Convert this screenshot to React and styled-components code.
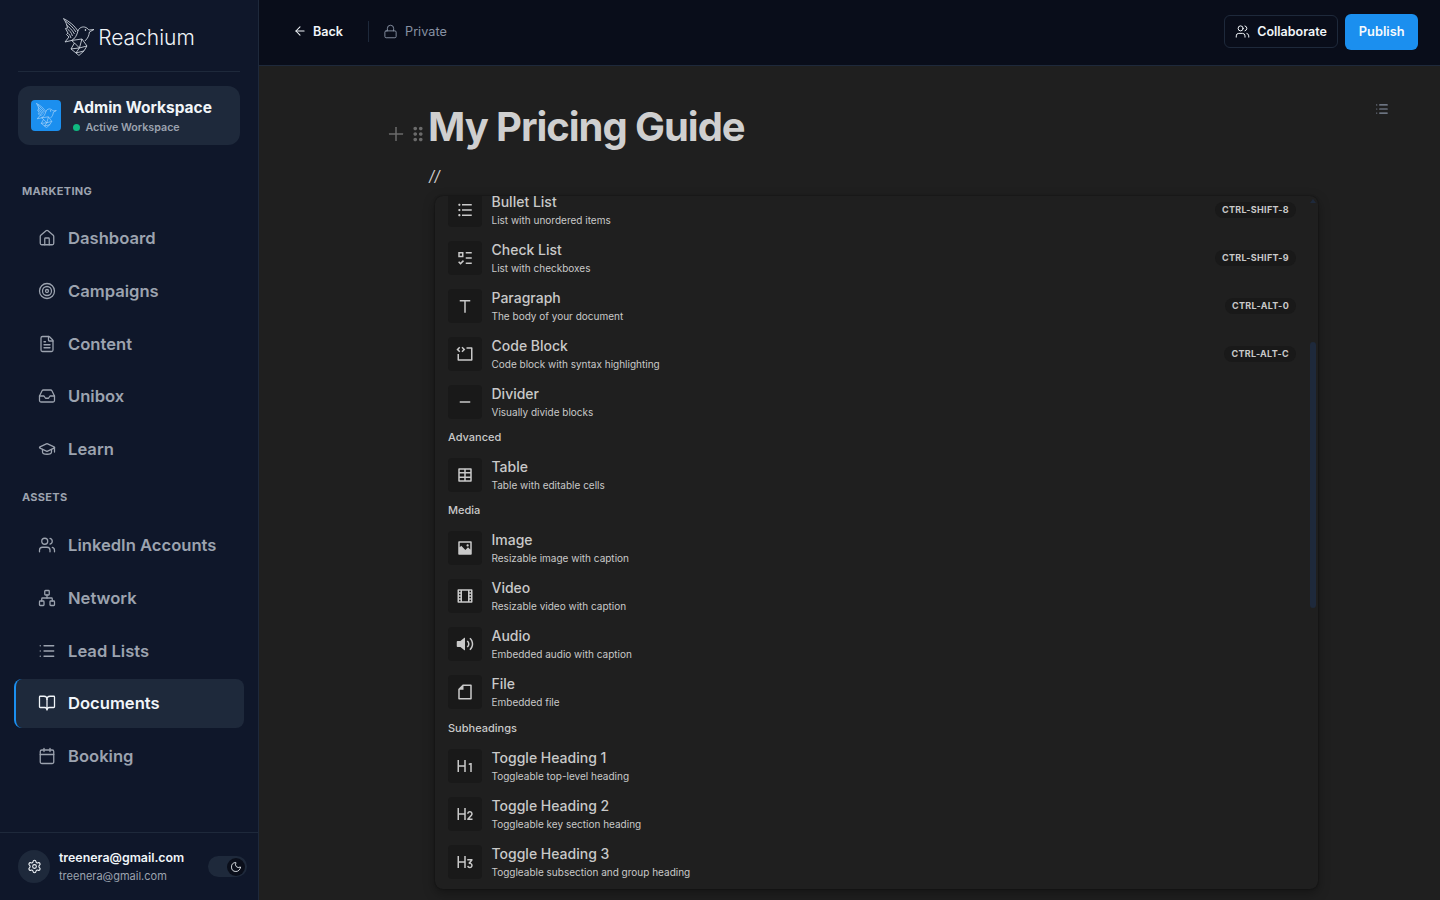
import styled, { createGlobalStyle } from "styled-components";
import {
  ArrowLeft,
  BookOpen,
  Calendar,
  FileText,
  GraduationCap,
  Home,
  Inbox,
  List,
  Lock,
  Moon,
  Network,
  Settings,
  Target,
  Users,
} from "lucide-react";
import {
  RiCodeBlock,
  RiFile2Line,
  RiFilmLine,
  RiH1,
  RiH2,
  RiH3,
  RiImage2Fill,
  RiListCheck3,
  RiListUnordered,
  RiSubtractFill,
  RiTable2,
  RiText,
  RiVolumeUpFill,
} from "react-icons/ri";
import { AiOutlinePlus } from "react-icons/ai";
import { MdDragIndicator } from "react-icons/md";

const GlobalStyle = createGlobalStyle`
  html, body {
    margin: 0;
    height: 100%;
    overflow: hidden;
    background: #1f1f1f;
    font-family: Inter, "Liberation Sans", sans-serif;
  }
  * { box-sizing: border-box; }
`;

const marketing = [
  { label: "Dashboard", Icon: Home },
  { label: "Campaigns", Icon: Target },
  { label: "Content", Icon: FileText },
  { label: "Unibox", Icon: Inbox },
  { label: "Learn", Icon: GraduationCap },
];

const assets = [
  { label: "LinkedIn Accounts", Icon: Users },
  { label: "Network", Icon: Network },
  { label: "Lead Lists", Icon: List },
  { label: "Documents", Icon: BookOpen, active: true },
  { label: "Booking", Icon: Calendar },
];

const blocks = [
  { title: "Bullet List", sub: "List with unordered items", Icon: RiListUnordered, key: "CTRL-SHIFT-8" },
  { title: "Check List", sub: "List with checkboxes", Icon: RiListCheck3, key: "CTRL-SHIFT-9" },
  { title: "Paragraph", sub: "The body of your document", Icon: RiText, key: "CTRL-ALT-0" },
  { title: "Code Block", sub: "Code block with syntax highlighting", Icon: RiCodeBlock, key: "CTRL-ALT-C" },
  { title: "Divider", sub: "Visually divide blocks", Icon: RiSubtractFill },
  { group: "Advanced" },
  { title: "Table", sub: "Table with editable cells", Icon: RiTable2 },
  { group: "Media" },
  { title: "Image", sub: "Resizable image with caption", Icon: RiImage2Fill },
  { title: "Video", sub: "Resizable video with caption", Icon: RiFilmLine },
  { title: "Audio", sub: "Embedded audio with caption", Icon: RiVolumeUpFill },
  { title: "File", sub: "Embedded file", Icon: RiFile2Line },
  { group: "Subheadings", tall: true },
  { title: "Toggle Heading 1", sub: "Toggleable top-level heading", Icon: RiH1 },
  { title: "Toggle Heading 2", sub: "Toggleable key section heading", Icon: RiH2 },
  { title: "Toggle Heading 3", sub: "Toggleable subsection and group heading", Icon: RiH3 },
];

const BirdLogo = ({ size = 38, color = "#e2e8f0" }) => (
  <svg width={size * 0.84} height={size} viewBox="0 0 32 38" fill="none" stroke={color} strokeWidth="0.8" strokeLinejoin="round">
    <path d="M0.5 0.5 C3 4 4 7 4.5 10 L2.5 10.5 L5 15 L3.5 16.5 L6 19 L2 24 L8.5 22.5 C12 21 14 17 15 13 C12 8 6 3 0.5 0.5Z" />
    <path d="M2.5 3 C6 6 10 9 13 14 M3.5 7 C6 9 9 11.5 11.5 16 M4.5 11 C6.5 12.5 8.5 14.5 9.5 18 M5.5 15.5 C6.5 16.5 7.5 18 8 20" />
    <path d="M15 13 C16 9.5 20 8 23 9.5 C25 10.5 25.5 11.5 26 12 L31 11.5 L26.5 14 C26 18 25 20 22 23" />
    <path d="M8.5 22.5 L19 21 L24 28 L21 33 L13 35 L8 31 L11.5 25Z" />
    <path d="M11.5 25 L16.5 30 L24 28 M16.5 30 L13 35 M16.5 30 L19 21 M8 31 L16.5 30 M13 35 L16 37.5 L21 33" />
    <circle cx="22.5" cy="12" r="0.5" fill={color} />
  </svg>
);

const NavGroup = ({ items }) => (
  <NavList>
    {items.map(({ label, Icon, active }) => (
      <NavItem key={label} $active={active}>
        <Icon size={18} strokeWidth={1.7} />
        <span>{label}</span>
      </NavItem>
    ))}
  </NavList>
);

const App = () => {
  return (
    <>
      <GlobalStyle />
      <S.Page>
        <S.Sidebar>
          <S.Brand>
            <BirdLogo />
            <S.BrandName>Reachium</S.BrandName>
          </S.Brand>
          <S.WorkspaceCard>
            <S.WorkspaceLogo>
              <BirdLogo size={25} color="#cfe6fb" />
            </S.WorkspaceLogo>
            <S.WorkspaceText>
              <S.WorkspaceName>Admin Workspace</S.WorkspaceName>
              <S.WorkspaceStatus>
                <S.StatusDot />
                Active Workspace
              </S.WorkspaceStatus>
            </S.WorkspaceText>
          </S.WorkspaceCard>
          <S.Scroller>
            <S.SectionLabel>MARKETING</S.SectionLabel>
            <NavGroup items={marketing} />
            <S.SectionLabel $tight>ASSETS</S.SectionLabel>
            <NavGroup items={assets} />
          </S.Scroller>
          <S.Footer>
            <S.SettingsButton>
              <Settings size={15} strokeWidth={1.7} />
            </S.SettingsButton>
            <S.UserInfo>
              <S.UserName>treenera@gmail.com</S.UserName>
              <S.UserMail>treenera@gmail.com</S.UserMail>
            </S.UserInfo>
            <S.ThemeToggle>
              <S.ToggleKnob>
                <Moon size={12} strokeWidth={1.7} />
              </S.ToggleKnob>
            </S.ThemeToggle>
          </S.Footer>
        </S.Sidebar>

        <S.Main>
          <S.TopBar>
            <S.BackButton>
              <ArrowLeft size={14} strokeWidth={1.8} />
              Back
            </S.BackButton>
            <S.BarDivider />
            <S.Privacy>
              <Lock size={15} strokeWidth={1.5} />
              Private
            </S.Privacy>
            <S.BarActions>
              <S.CollabButton>
                <Users size={15} strokeWidth={1.6} />
                Collaborate
              </S.CollabButton>
              <S.PublishButton>Publish</S.PublishButton>
            </S.BarActions>
          </S.TopBar>

          <S.Editor>
            <S.TocIcon>
              <List size={14} strokeWidth={2} />
            </S.TocIcon>
            <S.TitleRow>
              <S.SideMenu>
                <AiOutlinePlus size={20} />
                <MdDragIndicator size={22} />
              </S.SideMenu>
              <S.Title>My Pricing Guide</S.Title>
            </S.TitleRow>
            <S.SlashText>//</S.SlashText>
            <S.SlashMenu>
              <S.MenuList>
                {blocks.map((block) =>
                  block.group ? (
                    <S.GroupLabel key={block.group} $tall={block.tall}>
                      {block.group}
                    </S.GroupLabel>
                  ) : (
                    <S.MenuItem key={block.title}>
                      <S.MenuIcon>
                        <block.Icon size={18} />
                      </S.MenuIcon>
                      <S.MenuText>
                        <S.MenuTitle>{block.title}</S.MenuTitle>
                        <S.MenuSub>{block.sub}</S.MenuSub>
                      </S.MenuText>
                      {block.key && <S.Shortcut>{block.key}</S.Shortcut>}
                    </S.MenuItem>
                  )
                )}
              </S.MenuList>
              <S.ScrollArrow />
              <S.ScrollThumb />
            </S.SlashMenu>
          </S.Editor>
        </S.Main>
      </S.Page>
    </>
  );
};

export default App;

const NavList = styled.div`
  display: flex;
  flex-direction: column;
  gap: 4px;
`;

const NavItem = styled.div`
  display: flex;
  align-items: center;
  gap: 12px;
  height: 48.75px;
  margin: 0 14px;
  padding-left: 22px;
  border-radius: 8px;
  font-size: 16.6px;
  font-weight: 600;
  color: ${({ $active }) => ($active ? "#f1f5f9" : "#9ca3af")};
  background: ${({ $active }) => ($active ? "#1e293b" : "transparent")};
  border-left: 2px solid ${({ $active }) => ($active ? "#1b8fef" : "transparent")};
  svg {
    color: ${({ $active }) => ($active ? "#f1f5f9" : "#9ca3af")};
    flex-shrink: 0;
  }
`;

const S = {
  Page: styled.div`
    display: flex;
    width: 100%;
    height: 100vh;
    overflow: hidden;
  `,
  Sidebar: styled.aside`
    display: flex;
    flex-direction: column;
    flex: 0 0 259px;
    background: #0f172a;
    border-right: 1px solid #1e293b;
  `,
  Brand: styled.div`
    display: flex;
    align-items: center;
    justify-content: center;
    gap: 3px;
    height: 72px;
    margin: 0 18px;
    padding-top: 3px;
    border-bottom: 1px solid #1e293b;
  `,
  BrandName: styled.div`
    font-size: 21px;
    font-weight: 300;
    color: #f1f5f9;
  `,
  WorkspaceCard: styled.div`
    display: flex;
    align-items: center;
    gap: 12px;
    height: 59px;
    margin: 14px 18px 0;
    padding-left: 13px;
    border-radius: 12px;
    background: #1e293b;
  `,
  WorkspaceLogo: styled.div`
    display: flex;
    align-items: center;
    justify-content: center;
    width: 30px;
    height: 31px;
    border-radius: 4px;
    background: #1b8fef;
  `,
  WorkspaceText: styled.div`
    padding-top: 2px;
  `,
  WorkspaceName: styled.div`
    font-size: 15.5px;
    font-weight: 700;
    line-height: 20px;
    color: #f1f5f9;
  `,
  WorkspaceStatus: styled.div`
    display: flex;
    align-items: center;
    gap: 5.5px;
    margin-top: 2px;
    font-size: 10.7px;
    font-weight: 600;
    line-height: 16px;
    color: #9ca3af;
  `,
  StatusDot: styled.span`
    width: 7px;
    height: 7px;
    border-radius: 50%;
    background: #10b981;
  `,
  Scroller: styled.nav`
    flex: 1;
    min-height: 0;
  `,
  SectionLabel: styled.div`
    padding: ${({ $tight }) => ($tight ? "15.2px 22px 16px" : "38px 22px 14.8px")};
    font-size: 11px;
    font-weight: 700;
    line-height: 16px;
    letter-spacing: 0.3px;
    color: #9ca3af;
  `,
  Footer: styled.div`
    display: flex;
    align-items: center;
    height: 68px;
    padding: 0 11px 0 18px;
    border-top: 1px solid #1e293b;
  `,
  SettingsButton: styled.div`
    display: flex;
    align-items: center;
    justify-content: center;
    flex-shrink: 0;
    width: 32px;
    height: 33px;
    border-radius: 50%;
    background: #1e293b;
    color: #f1f5f9;
  `,
  UserInfo: styled.div`
    flex: 1;
    margin-left: 9px;
  `,
  UserName: styled.div`
    font-size: 12.4px;
    font-weight: 600;
    line-height: 18px;
    color: #f1f5f9;
  `,
  UserMail: styled.div`
    font-size: 11px;
    font-weight: 400;
    line-height: 18px;
    color: #9ca3af;
  `,
  ThemeToggle: styled.div`
    display: flex;
    align-items: center;
    justify-content: flex-end;
    width: 39px;
    height: 21px;
    padding-right: 2px;
    border-radius: 11px;
    background: #1e293b;
  `,
  ToggleKnob: styled.div`
    display: flex;
    align-items: center;
    justify-content: center;
    width: 18px;
    height: 18px;
    border-radius: 50%;
    background: #0a0e1a;
    color: #f1f5f9;
  `,
  Main: styled.main`
    display: flex;
    flex-direction: column;
    flex: 1;
    min-width: 0;
  `,
  TopBar: styled.header`
    display: flex;
    align-items: center;
    flex: 0 0 66px;
    padding: 0 22px 2px 34px;
    background: #090d1a;
    border-bottom: 1px solid #1e293b;
  `,
  BackButton: styled.div`
    display: flex;
    align-items: center;
    gap: 6px;
    padding-bottom: 1px;
    font-size: 12.6px;
    font-weight: 600;
    color: #f1f5f9;
  `,
  BarDivider: styled.div`
    width: 1px;
    height: 21px;
    margin: 0 14px 0 25px;
    background: #1e293b;
  `,
  Privacy: styled.div`
    display: flex;
    align-items: center;
    gap: 7px;
    padding-bottom: 1px;
    font-size: 12.7px;
    font-weight: 400;
    color: #8791a3;
    svg {
      color: #8791a3;
    }
  `,
  BarActions: styled.div`
    display: flex;
    align-items: center;
    gap: 7px;
    margin-left: auto;
  `,
  CollabButton: styled.div`
    display: flex;
    align-items: center;
    gap: 7px;
    height: 33px;
    padding: 0 10.5px 1px;
    border: 1px solid #1e293b;
    border-radius: 6px;
    font-size: 12.5px;
    font-weight: 600;
    color: #f1f5f9;
  `,
  PublishButton: styled.div`
    display: flex;
    align-items: center;
    height: 36px;
    padding: 0 13.5px 1px;
    border-radius: 6px;
    background: #1b8fef;
    font-size: 12.8px;
    font-weight: 600;
    color: #f8fafc;
  `,
  Editor: styled.div`
    position: relative;
    flex: 1;
    padding: 34px 0 0 170px;
    background: #1f1f1f;
  `,
  TocIcon: styled.div`
    position: absolute;
    top: 36px;
    right: 51px;
    color: #8791a3;
    line-height: 0;
  `,
  TitleRow: styled.div`
    position: relative;
  `,
  SideMenu: styled.div`
    position: absolute;
    left: -43px;
    top: 23px;
    display: flex;
    align-items: center;
    gap: 1px;
    color: #6b6b6b;
  `,
  Title: styled.h1`
    margin: 0 0 0 -1px;
    font-size: 40px;
    font-weight: 700;
    line-height: 54px;
    letter-spacing: -1.05px;
    color: #cfcfcf;
  `,
  SlashText: styled.div`
    margin-top: 10px;
    font-size: 15px;
    font-style: italic;
    line-height: 24px;
    color: #cfcfcf;
  `,
  SlashMenu: styled.div`
    position: absolute;
    left: 176px;
    top: 130px;
    width: 883px;
    height: 693px;
    overflow: hidden;
    border-radius: 8px;
    background: #1f1f1f;
    box-shadow: 0 4px 12px rgba(0, 0, 0, 0.35), 0 0 2px rgba(0, 0, 0, 0.5);
  `,
  MenuList: styled.div`
    margin-top: -10px;
    padding: 0 22px 0 13px;
  `,
  GroupLabel: styled.div`
    display: flex;
    align-items: center;
    height: ${({ $tall }) => ($tall ? "26px" : "25px")};
    padding-bottom: 2.4px;
    font-size: 11px;
    font-weight: 500;
    color: #c9c9c9;
  `,
  MenuItem: styled.div`
    display: flex;
    align-items: center;
    gap: 9.5px;
    height: 48px;
  `,
  MenuIcon: styled.div`
    display: flex;
    align-items: center;
    justify-content: center;
    flex-shrink: 0;
    width: 34px;
    height: 34px;
    border-radius: 4px;
    background: #191919;
    color: #c9c9c9;
  `,
  MenuText: styled.div`
    flex: 1;
    min-width: 0;
  `,
  MenuTitle: styled.div`
    font-size: 14px;
    font-weight: 500;
    line-height: 20px;
    color: #c9c9c9;
  `,
  MenuSub: styled.div`
    margin: 1px 0;
    font-size: 10px;
    font-weight: 400;
    line-height: 14px;
    color: #c9c9c9;
  `,
  Shortcut: styled.div`
    display: flex;
    align-items: center;
    height: 16px;
    padding: 0 7px 1px;
    border-radius: 8px;
    background: #191919;
    font-size: 9px;
    font-weight: 700;
    letter-spacing: 0.3px;
    color: #c9c9c9;
  `,
  ScrollArrow: styled.div`
    position: absolute;
    top: 3px;
    right: 2px;
    width: 0;
    height: 0;
    border-left: 3px solid transparent;
    border-right: 3px solid transparent;
    border-bottom: 4px solid #1e293b;
  `,
  ScrollThumb: styled.div`
    position: absolute;
    top: 146px;
    right: 2px;
    width: 6px;
    height: 266px;
    border-radius: 3px;
    background: #1e293b;
  `,
};
